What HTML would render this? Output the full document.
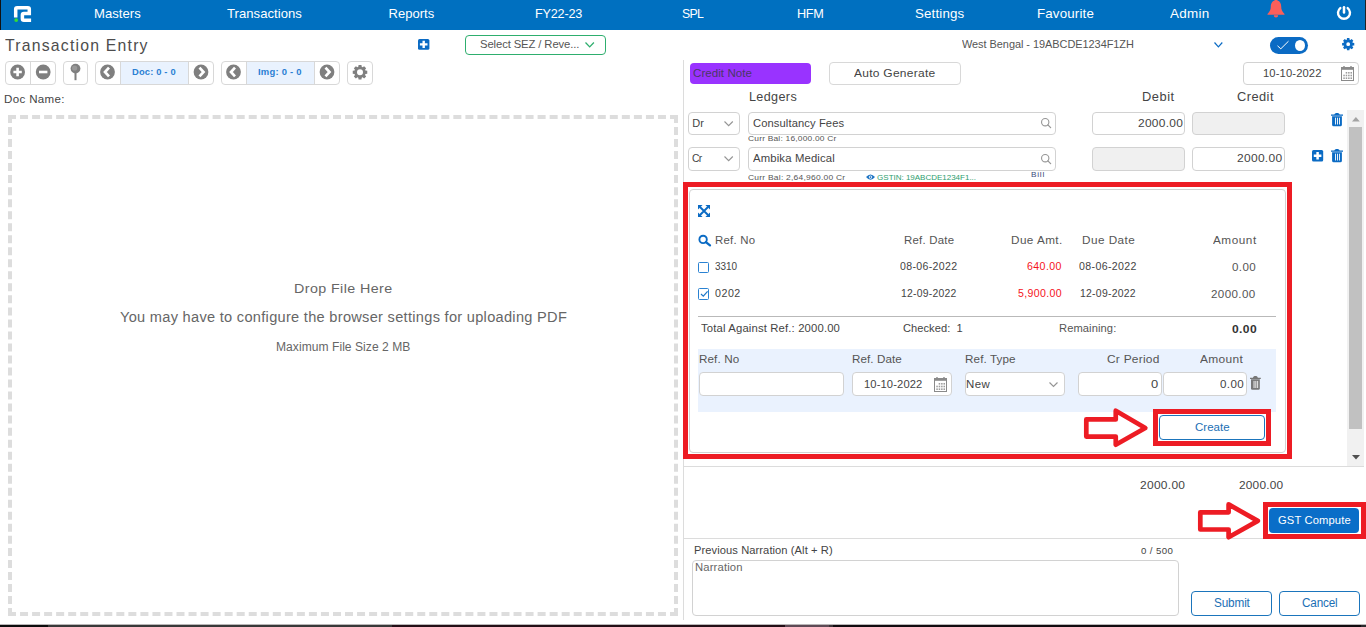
<!DOCTYPE html>
<html lang="en">
<head>
<meta charset="utf-8">
<title>Transaction Entry</title>
<style>
*{box-sizing:border-box;margin:0;padding:0}
html,body{width:1366px;height:627px;overflow:hidden;background:#fff}
body{position:relative;font-family:"Liberation Sans",Arial,sans-serif;color:#444;font-size:12px}
.a{position:absolute}
.t{position:absolute;white-space:nowrap;line-height:1;transform-origin:0 0}
.nav{left:0;top:0;width:1366px;height:30px;background:#0070c0}
.box{position:absolute;border:1px solid #d2d2d2;border-radius:4px;background:#fff}
.dis{background:#f0f0f0}
.btn{position:absolute;border:1px solid #d8d8d8;border-radius:4px;background:#fff}
svg{position:absolute;overflow:visible}
</style>
</head>
<body>
<div class="a nav">
<div class="a" style="left:0;top:0;width:1px;height:30px;background:#111"></div>
<div class="a" style="left:1365px;top:0;width:1px;height:30px;background:#222"></div>
<svg style="left:13px;top:5px" width="19" height="18" viewBox="0 0 19 18"><path d="M2.700 12.500V4.200Q2.700 2.700 4.200 2.700H14.800Q16.300 2.700 16.300 4.200V8.600H10.900Q9.400 8.600 9.400 10.100V13.700Q9.400 15.200 10.900 15.200H18.100" fill="none" stroke="#fff" stroke-width="3.500"/><circle cx="3.200" cy="15.100" r="1.900" fill="#35dc35"/></svg>

<svg style="left:1267.4px;top:0px" width="18" height="18" viewBox="0 0 18 18"><path d="M9 -1C9.900 -1 10.400 -.3 10.400 .5C13 1.300 14.200 3.600 14.200 6.500C14.200 9.600 15.200 11.600 17.500 14V14.800H.5V14C2.800 11.600 3.800 9.600 3.800 6.500C3.800 3.600 5 1.300 7.600 .5C7.600 -.3 8.100 -1 9 -1Z" fill="#fa5f5a"/><path d="M6.800 15.200H11.200A2.200 2.200 0 0 1 6.800 15.200Z" fill="#fa5f5a"/></svg>

<svg style="left:1337.3px;top:6px" width="14" height="15" viewBox="0 0 14 15"><path d="M3.300 2.100A6 6 0 1 0 10.700 2.100" fill="none" stroke="#fff" stroke-width="2.400" stroke-linecap="round"/><path d="M7 1.200V6.400" stroke="#fff" stroke-width="2.500" stroke-linecap="round"/></svg>

<div class="t" style="left:94.2px;top:7px;font-size:13px;color:#fff;transform:scaleX(1.006);letter-spacing:0.05px;">Masters</div>
<div class="t" style="left:227.1px;top:7px;font-size:13px;color:#fff;transform:scaleX(1.006);letter-spacing:0.04px;">Transactions</div>
<div class="t" style="left:388.6px;top:7px;font-size:13px;color:#fff;letter-spacing:0.02px;">Reports</div>
<div class="t" style="left:534.6px;top:7px;font-size:13px;color:#fff;transform:scaleX(0.974);letter-spacing:-0.22px;">FY22-23</div>
<div class="t" style="left:681.6px;top:7px;font-size:13px;color:#fff;transform:scaleX(0.942);letter-spacing:-0.72px;">SPL</div>
<div class="t" style="left:796.6px;top:7px;font-size:13px;color:#fff;transform:scaleX(0.975);letter-spacing:-0.35px;">HFM</div>
<div class="t" style="left:915.1px;top:7px;font-size:13px;color:#fff;transform:scaleX(1.024);letter-spacing:0.16px;">Settings</div>
<div class="t" style="left:1036.6px;top:7px;font-size:13px;color:#fff;transform:scaleX(1.024);letter-spacing:0.16px;">Favourite</div>
<div class="t" style="left:1170.1px;top:7px;font-size:13px;color:#fff;transform:scaleX(1.033);letter-spacing:0.30px;">Admin</div>
</div>
<div class="t" style="left:5.1px;top:37px;font-size:17px;color:#4d4d4d;transform:scaleX(0.930);letter-spacing:1.29px;">Transaction Entry</div>
<svg style="left:418px;top:38.7px" width="11.4" height="10.8" viewBox="0 0 11.4 10.8"><rect width="11.400" height="10.800" rx="1.500" fill="#0b6bc4"/><path d="M5.700 1.700V9.100M1.900 5.400H9.500" stroke="#fff" stroke-width="2.400"/></svg>

<div class="a" style="left:465px;top:35px;width:141px;height:20px;border:1px solid #2eae6e;border-radius:4px;background:#fff"></div>

<div class="t" style="left:480.1px;top:39px;font-size:11.5px;color:#555;transform:scaleX(0.980);letter-spacing:-0.11px;">Select SEZ / Reve...</div>
<svg style="left:585.4px;top:42px" width="9.4" height="5.6" viewBox="0 0 9.4 5.6"><path d="M.5 .5L4.7 4.9L8.9 .5" fill="none" stroke="#2eae6e" stroke-width="1.3"/></svg>

<div class="t" style="left:961.6px;top:39px;font-size:11px;color:#555;transform:scaleX(0.994);letter-spacing:-0.04px;">West Bengal - 19ABCDE1234F1ZH</div>
<svg style="left:1214.3px;top:42.3px" width="8.8" height="5.6" viewBox="0 0 8.8 5.6"><path d="M.5 .5L4.4 4.9L8.3 .5" fill="none" stroke="#0b6bc4" stroke-width="1.2"/></svg>

<div class="a" style="left:1270px;top:37px;width:38px;height:17px;border-radius:9px;background:#0b6bc4"></div>

<svg style="left:1276px;top:40px" width="14" height="10" viewBox="0 0 14 10"><path d="M1.500 5.800L4.800 8.800L12.500 1.200" fill="none" stroke="#fff" stroke-width="1"/></svg>

<div class="a" style="left:1295px;top:40px;width:10px;height:11px;border-radius:50%;background:#fff"></div>

<svg style="left:1342px;top:38px" width="12.4" height="12.4" viewBox="0 0 12.4 12.4"><path fill-rule="evenodd" fill="#0b6bc4" d="M4.78 1.72 L4.99 0.12 L7.41 0.12 L7.62 1.72 L8.37 2.03 L9.64 1.04 L11.36 2.76 L10.37 4.03 L10.68 4.78 L12.28 4.99 L12.28 7.41 L10.68 7.62 L10.37 8.37 L11.36 9.64 L9.64 11.36 L8.37 10.37 L7.62 10.68 L7.41 12.28 L4.99 12.28 L4.78 10.68 L4.03 10.37 L2.76 11.36 L1.04 9.64 L2.03 8.37 L1.72 7.62 L0.12 7.41 L0.12 4.99 L1.72 4.78 L2.03 4.03 L1.04 2.76 L2.76 1.04 L4.03 2.03Z M4.30 6.20 a1.90 1.90 0 1 0 3.80 0 a1.90 1.90 0 1 0 -3.80 0Z"/></svg>

<div class="btn" style="left:5px;top:61px;width:51px;height:24px;"></div>

<div class="a" style="left:30px;top:61px;width:1px;height:24px;background:#d8d8d8"></div>

<div class="btn" style="left:63px;top:61px;width:25px;height:24px;"></div>

<div class="btn" style="left:95px;top:61px;width:119px;height:24px;"></div>

<div class="a" style="left:120px;top:62px;width:69px;height:22px;background:#e9f2fe;border-left:1px solid #d8d8d8;border-right:1px solid #d8d8d8"></div>

<div class="btn" style="left:221px;top:61px;width:119px;height:24px;"></div>

<div class="a" style="left:246px;top:62px;width:69px;height:22px;background:#e9f2fe;border-left:1px solid #d8d8d8;border-right:1px solid #d8d8d8"></div>

<div class="btn" style="left:347px;top:61px;width:26px;height:24px;"></div>

<svg style="left:0;top:60px" width="380" height="26" viewBox="0 60 380 26"><circle cx="17.6" cy="72" r="7.4" fill="#7f7f7f"/><path d="M13.4 72.0h8.4M17.6 67.8v8.4" stroke="#fff" stroke-width="2.6"/><circle cx="43.2" cy="72" r="7.4" fill="#7f7f7f"/><path d="M39.0 72.0h8.4" stroke="#fff" stroke-width="2.6"/><circle cx="107.5" cy="72" r="7.4" fill="#7f7f7f"/><path d="M109.0 67.7l-4 4.300l4 4.300" fill="none" stroke="#fff" stroke-width="2.700"/><circle cx="201" cy="72" r="7.4" fill="#7f7f7f"/><path d="M199.5 67.7l4 4.300l-4 4.300" fill="none" stroke="#fff" stroke-width="2.700"/><circle cx="233.5" cy="72" r="7.4" fill="#7f7f7f"/><path d="M235.0 67.7l-4 4.300l4 4.300" fill="none" stroke="#fff" stroke-width="2.700"/><circle cx="327" cy="72" r="7.4" fill="#7f7f7f"/><path d="M325.5 67.7l4 4.300l-4 4.300" fill="none" stroke="#fff" stroke-width="2.700"/><circle cx="75.500" cy="68.600" r="4.900" fill="#7f7f7f"/><circle cx="74.600" cy="68" r="2.600" fill="#989898"/><rect x="74.500" y="73" width="2" height="7.200" fill="#7f7f7f"/><path fill-rule="evenodd" fill="#7f7f7f" d="M358.28 66.87 L358.56 65.04 L361.44 65.04 L361.72 66.87 L362.63 67.24 L364.11 66.15 L366.15 68.19 L365.06 69.67 L365.43 70.58 L367.26 70.86 L367.26 73.74 L365.43 74.02 L365.06 74.93 L366.15 76.41 L364.11 78.45 L362.63 77.36 L361.72 77.73 L361.44 79.56 L358.56 79.56 L358.28 77.73 L357.37 77.36 L355.89 78.45 L353.85 76.41 L354.94 74.93 L354.57 74.02 L352.74 73.74 L352.74 70.86 L354.57 70.58 L354.94 69.67 L353.85 68.19 L355.89 66.15 L357.37 67.24Z M357.00 72.30 a3.00 3.00 0 1 0 6.00 0 a3.00 3.00 0 1 0 -6.00 0Z"/></svg>
<div class="t" style="left:132.1px;top:68px;font-size:9px;color:#2b7fd3;font-weight:bold;transform:scaleX(1.037);letter-spacing:0.17px;">Doc: 0 - 0</div>
<div class="t" style="left:258.1px;top:68px;font-size:9px;color:#2b7fd3;font-weight:bold;transform:scaleX(1.050);letter-spacing:0.22px;">Img: 0 - 0</div>
<div class="t" style="left:4.2px;top:94px;font-size:11px;color:#444;transform:scaleX(1.049);letter-spacing:0.34px;">Doc Name:</div>
<div class="a" style="left:8px;top:115px;width:670px;height:501px;border:4px dashed #ddd"></div>

<div class="t" style="left:293.6px;top:282px;font-size:13.5px;color:#666;transform:scaleX(1.057);letter-spacing:0.39px;">Drop File Here</div>
<div class="t" style="left:119.6px;top:310px;font-size:14px;color:#666;transform:scaleX(1.042);letter-spacing:0.28px;">You may have to configure the browser settings for uploading PDF</div>
<div class="t" style="left:275.6px;top:341px;font-size:12px;color:#666;transform:scaleX(1.006);letter-spacing:0.04px;">Maximum File Size 2 MB</div>
<div class="a" style="left:683px;top:60px;width:1px;height:560px;background:#dcdcdc"></div>

<div class="a" style="left:690px;top:63px;width:121px;height:21px;background:#9933ff;border-radius:4px"></div>

<div class="t" style="left:692.6px;top:68px;font-size:11.5px;color:#4b3766;transform:scaleX(1.007);letter-spacing:0.04px;">Credit Note</div>
<div class="btn" style="left:829px;top:62px;width:132px;height:23px;"></div>

<div class="t" style="left:854.1px;top:68px;font-size:11.5px;color:#444;transform:scaleX(1.042);letter-spacing:0.26px;">Auto Generate</div>
<div class="box" style="left:1243px;top:62px;width:116px;height:23px;"></div>

<div class="t" style="left:1263.2px;top:68px;font-size:11px;color:#444;transform:scaleX(1.019);letter-spacing:0.12px;">10-10-2022</div>
<svg style="left:1341px;top:65.6px" width="13" height="15" viewBox="0 0 13 15"><rect x=".5" y="1.500" width="12" height="13" fill="#fff" stroke="#8a8a8a" stroke-width="1"/><rect x="0" y="1" width="13" height="2.800" fill="#8a8a8a"/><path d="M3 0V2.200M10 0V2.200" stroke="#8a8a8a" stroke-width="1.400"/><rect x="4.7" y="6" width="1.500" height="1.600" fill="#9c9c9c"/><rect x="7.1" y="6" width="1.500" height="1.600" fill="#9c9c9c"/><rect x="9.5" y="6" width="1.500" height="1.600" fill="#9c9c9c"/><rect x="2.3" y="8.7" width="1.500" height="1.600" fill="#9c9c9c"/><rect x="4.7" y="8.7" width="1.500" height="1.600" fill="#9c9c9c"/><rect x="7.1" y="8.7" width="1.500" height="1.600" fill="#9c9c9c"/><rect x="9.5" y="8.7" width="1.500" height="1.600" fill="#9c9c9c"/><rect x="2.3" y="11.4" width="1.500" height="1.600" fill="#9c9c9c"/><rect x="4.7" y="11.4" width="1.500" height="1.600" fill="#9c9c9c"/><rect x="7.1" y="11.4" width="1.500" height="1.600" fill="#9c9c9c"/><rect x="9.5" y="11.4" width="1.500" height="1.600" fill="#9c9c9c"/></svg>

<div class="t" style="left:749.4px;top:91px;font-size:12px;color:#444;transform:scaleX(1.049);letter-spacing:0.35px;">Ledgers</div>
<div class="t" style="left:1142.2px;top:91px;font-size:12px;color:#444;transform:scaleX(1.070);letter-spacing:0.49px;">Debit</div>
<div class="t" style="left:1237.3px;top:91px;font-size:12px;color:#444;transform:scaleX(1.068);letter-spacing:0.43px;">Credit</div>
<div class="box" style="left:688px;top:112px;width:52px;height:23px;"></div>

<div class="t" style="left:692.3px;top:118px;font-size:11px;color:#444;letter-spacing:-0.00px;">Dr</div>
<svg style="left:723.7px;top:121.2px" width="9.3" height="5.4" viewBox="0 0 9.3 5.4"><path d="M.5 .5L4.65 4.7L8.8 .5" fill="none" stroke="#959595" stroke-width="1.15"/></svg>

<div class="box" style="left:748px;top:112px;width:308px;height:23px;"></div>

<div class="t" style="left:753.1px;top:118px;font-size:11px;color:#444;transform:scaleX(1.017);letter-spacing:0.10px;">Consultancy Fees</div>
<svg style="left:1041px;top:118px" width="10.2" height="10.2" viewBox="0 0 10.2 10.2"><circle cx="4.222" cy="4.222" r="3.672" fill="none" stroke="#959595" stroke-width="1.1"/><path d="M6.86584 6.86584L9.65 9.65" stroke="#959595" stroke-width="1.265" stroke-linecap="round"/></svg>

<div class="box" style="left:1092px;top:112px;width:93px;height:23px;"></div>

<div class="t" style="left:1137.6px;top:118px;font-size:11.5px;color:#444;transform:scaleX(1.039);letter-spacing:0.27px;">2000.00</div>
<div class="box dis" style="left:1192px;top:112px;width:93px;height:23px;"></div>

<svg style="left:1331px;top:112.5px" width="12" height="13.2" viewBox="0 0 12 13.2" preserveAspectRatio="none"><path d="M0 1.600H12V2.800H0ZM3.300 1.800C3.300 -.5 8.700 -.5 8.700 1.800Z" fill="#0b6bc4"/><path d="M1.100 3.200H10.900V11.700Q10.900 13.200 9.400 13.200H2.600Q1.100 13.200 1.100 11.700Z" fill="#0b6bc4"/><path d="M4.500 4.700V11.500M6.500 4.700V11.500M8.500 4.700V11.500" stroke="#fff" stroke-width=".9"/></svg>

<div class="t" style="left:747.6px;top:135px;font-size:8px;color:#555;transform:scaleX(1.051);letter-spacing:0.19px;">Curr Bal: 16,000.00 Cr</div>
<div class="box" style="left:688px;top:147px;width:52px;height:24px;"></div>

<div class="t" style="left:692.3px;top:153px;font-size:11px;color:#444;transform:scaleX(0.942);letter-spacing:-0.67px;">Cr</div>
<svg style="left:723.7px;top:155.7px" width="9.3" height="5.4" viewBox="0 0 9.3 5.4"><path d="M.5 .5L4.65 4.7L8.8 .5" fill="none" stroke="#959595" stroke-width="1.15"/></svg>

<div class="box" style="left:748px;top:147px;width:308px;height:24px;"></div>

<div class="t" style="left:753.1px;top:153px;font-size:11px;color:#444;transform:scaleX(1.026);letter-spacing:0.16px;">Ambika Medical</div>
<svg style="left:1041px;top:153.5px" width="10.2" height="10.2" viewBox="0 0 10.2 10.2"><circle cx="4.222" cy="4.222" r="3.672" fill="none" stroke="#959595" stroke-width="1.1"/><path d="M6.86584 6.86584L9.65 9.65" stroke="#959595" stroke-width="1.265" stroke-linecap="round"/></svg>

<div class="box dis" style="left:1092px;top:147px;width:93px;height:24px;"></div>

<div class="box" style="left:1192px;top:147px;width:93px;height:24px;"></div>

<div class="t" style="left:1237.2px;top:153px;font-size:11.5px;color:#444;transform:scaleX(1.041);letter-spacing:0.29px;">2000.00</div>
<svg style="left:1312.2px;top:150.3px" width="11.2" height="11.5" viewBox="0 0 11.2 11.5"><rect width="11.200" height="11.500" rx="1.500" fill="#0b6bc4"/><path d="M5.600 1.900V9.600M1.800 5.750H9.400" stroke="#fff" stroke-width="2.500"/></svg>

<svg style="left:1331px;top:148.5px" width="12" height="13.2" viewBox="0 0 12 13.2" preserveAspectRatio="none"><path d="M0 1.600H12V2.800H0ZM3.300 1.800C3.300 -.5 8.700 -.5 8.700 1.800Z" fill="#0b6bc4"/><path d="M1.100 3.200H10.900V11.700Q10.900 13.200 9.400 13.200H2.600Q1.100 13.200 1.100 11.700Z" fill="#0b6bc4"/><path d="M4.500 4.700V11.500M6.500 4.700V11.500M8.500 4.700V11.500" stroke="#fff" stroke-width=".9"/></svg>

<div class="t" style="left:747.6px;top:174px;font-size:8px;color:#555;transform:scaleX(1.058);letter-spacing:0.22px;">Curr Bal: 2,64,960.00 Cr</div>
<svg style="left:865.8px;top:174px" width="9" height="6.2" viewBox="0 0 9 6.2"><path d="M0 3.100Q4.500 -2.200 9 3.100Q4.500 8.400 0 3.100Z" fill="#1d74c4"/><circle cx="4.500" cy="3.100" r="1.700" fill="#fff"/><circle cx="4.500" cy="3.100" r=".9" fill="#1d74c4"/></svg>

<div class="t" style="left:877.1px;top:174px;font-size:8px;color:#2e9e6e;letter-spacing:-0.01px;">GSTIN: 19ABCDE1234F1...</div>
<div class="t" style="left:1031.1px;top:171px;font-size:7.5px;color:#3a4a7a;transform:scaleX(1.100);letter-spacing:0.69px;">Bill</div>
<div class="a" style="left:1347px;top:110px;width:17px;height:356px;background:#f1f1f1"></div>

<div class="a" style="left:1349px;top:127px;width:13px;height:302px;background:#c1c1c1"></div>

<svg style="left:1351.5px;top:116.7px" width="7.8" height="4.4" viewBox="0 0 7.8 4.4"><path d="M0 4.400L3.900 0L7.800 4.400Z" fill="#a3a3a3"/></svg>

<svg style="left:1351.5px;top:454.5px" width="8" height="4.5" viewBox="0 0 8 4.5"><path d="M0 0L4 4.500L8 0Z" fill="#505050"/></svg>

<div class="a" style="left:689px;top:189px;width:597px;height:264px;border:1px solid #d2d2d2;border-radius:4px;background:#fff"></div>

<div class="a" style="left:683px;top:182px;width:609px;height:277px;border:5px solid #ed1c24"></div>

<svg style="left:698px;top:205.2px" width="12" height="12" viewBox="0 0 12 12"><path d="M2 2L10 10M10 2L2 10" stroke="#0b6bc4" stroke-width="1.900"/><path d="M0 0H4.600L0 4.600ZM12 0H7.400L12 4.600ZM0 12H4.600L0 7.400ZM12 12H7.400L12 7.400Z" fill="#0b6bc4"/></svg>

<svg style="left:698.3px;top:235px" width="13" height="11.5" viewBox="0 0 13 11.5"><circle cx="5.100" cy="4.400" r="3.700" fill="none" stroke="#0b6bc4" stroke-width="1.900"/><path d="M7.900 7.100L12 10.400" stroke="#0b6bc4" stroke-width="2.300" stroke-linecap="round"/></svg>

<div class="t" style="left:715.4px;top:235px;font-size:11px;color:#555;transform:scaleX(1.037);letter-spacing:0.23px;">Ref. No</div>
<div class="t" style="left:903.9px;top:235px;font-size:11px;color:#555;transform:scaleX(1.037);letter-spacing:0.22px;">Ref. Date</div>
<div class="t" style="left:1010.6px;top:235px;font-size:11px;color:#555;transform:scaleX(1.065);letter-spacing:0.42px;">Due Amt.</div>
<div class="t" style="left:1081.8px;top:235px;font-size:11px;color:#555;transform:scaleX(1.067);letter-spacing:0.44px;">Due Date</div>
<div class="t" style="left:1212.5px;top:235px;font-size:11px;color:#555;transform:scaleX(1.067);letter-spacing:0.51px;">Amount</div>
<div class="a" style="left:698px;top:261.5px;width:11.3px;height:11.5px;border:1px solid #2a82d2;border-radius:1.5px;background:#fff"></div>

<div class="t" style="left:715.0px;top:262px;font-size:10px;color:#444;transform:scaleX(0.994);letter-spacing:-0.04px;">3310</div>
<div class="t" style="left:900.3px;top:262px;font-size:10px;color:#444;transform:scaleX(1.056);letter-spacing:0.32px;">08-06-2022</div>
<div class="t" style="left:1027.4px;top:262px;font-size:10px;color:#f5131b;transform:scaleX(1.062);letter-spacing:0.38px;">640.00</div>
<div class="t" style="left:1079.2px;top:262px;font-size:10px;color:#444;transform:scaleX(1.060);letter-spacing:0.34px;">08-06-2022</div>
<div class="t" style="left:1231.6px;top:262px;font-size:11px;color:#555;transform:scaleX(1.054);letter-spacing:0.39px;">0.00</div>
<div class="a" style="left:698px;top:288.3px;width:11.3px;height:11.5px;border:1px solid #2a82d2;border-radius:1.5px;background:#fff"></div>

<svg style="left:699.5px;top:290.3px" width="8.5" height="7.5" viewBox="0 0 8.5 7.5"><path d="M1 4L3.300 6.200L7.600 1.300" fill="none" stroke="#1f78c8" stroke-width="1.200"/></svg>

<div class="t" style="left:715.0px;top:289px;font-size:10px;color:#444;transform:scaleX(1.066);letter-spacing:0.49px;">0202</div>
<div class="t" style="left:900.8px;top:289px;font-size:10px;color:#444;transform:scaleX(1.039);letter-spacing:0.22px;">12-09-2022</div>
<div class="t" style="left:1018.2px;top:289px;font-size:10px;color:#f5131b;transform:scaleX(1.059);letter-spacing:0.33px;">5,900.00</div>
<div class="t" style="left:1079.8px;top:289px;font-size:10px;color:#444;transform:scaleX(1.043);letter-spacing:0.24px;">12-09-2022</div>
<div class="t" style="left:1211.2px;top:289px;font-size:11px;color:#555;transform:scaleX(1.054);letter-spacing:0.36px;">2000.00</div>
<div class="a" style="left:698px;top:316px;width:578px;height:1px;background:#b9b9b9"></div>

<div class="t" style="left:701.0px;top:323px;font-size:11px;color:#444;transform:scaleX(1.028);letter-spacing:0.14px;">Total Against Ref.: 2000.00</div>
<div class="t" style="left:902.6px;top:323px;font-size:11px;color:#444;transform:scaleX(1.009);letter-spacing:0.05px;white-space:pre;">Checked:  1</div>
<div class="t" style="left:1058.6px;top:323px;font-size:11px;color:#555;transform:scaleX(1.014);letter-spacing:0.09px;">Remaining:</div>
<div class="t" style="left:1231.6px;top:324px;font-size:11.5px;color:#333;font-weight:bold;transform:scaleX(1.048);letter-spacing:0.36px;">0.00</div>
<div class="a" style="left:698px;top:349px;width:578px;height:63px;background:#eaf2fe"></div>

<div class="t" style="left:698.6px;top:354px;font-size:11.5px;color:#555;transform:scaleX(1.015);letter-spacing:0.10px;">Ref. No</div>
<div class="t" style="left:851.8px;top:354px;font-size:11.5px;color:#555;transform:scaleX(1.012);letter-spacing:0.08px;">Ref. Date</div>
<div class="t" style="left:964.6px;top:354px;font-size:11.5px;color:#555;transform:scaleX(1.016);letter-spacing:0.10px;">Ref. Type</div>
<div class="t" style="left:1107.3px;top:354px;font-size:11.5px;color:#555;transform:scaleX(1.039);letter-spacing:0.23px;">Cr Period</div>
<div class="t" style="left:1199.7px;top:354px;font-size:11.5px;color:#555;transform:scaleX(1.040);letter-spacing:0.32px;">Amount</div>
<div class="box" style="left:699px;top:372px;width:145px;height:24px;"></div>

<div class="box" style="left:852px;top:372px;width:100px;height:24px;"></div>

<div class="t" style="left:864.3px;top:379px;font-size:11px;color:#444;transform:scaleX(1.018);letter-spacing:0.11px;">10-10-2022</div>
<svg style="left:934px;top:376.8px" width="13" height="15" viewBox="0 0 13 15"><rect x=".5" y="1.500" width="12" height="13" fill="#fff" stroke="#8a8a8a" stroke-width="1"/><rect x="0" y="1" width="13" height="2.800" fill="#8a8a8a"/><path d="M3 0V2.200M10 0V2.200" stroke="#8a8a8a" stroke-width="1.400"/><rect x="4.7" y="6" width="1.500" height="1.600" fill="#9c9c9c"/><rect x="7.1" y="6" width="1.500" height="1.600" fill="#9c9c9c"/><rect x="9.5" y="6" width="1.500" height="1.600" fill="#9c9c9c"/><rect x="2.3" y="8.7" width="1.500" height="1.600" fill="#9c9c9c"/><rect x="4.7" y="8.7" width="1.500" height="1.600" fill="#9c9c9c"/><rect x="7.1" y="8.7" width="1.500" height="1.600" fill="#9c9c9c"/><rect x="9.5" y="8.7" width="1.500" height="1.600" fill="#9c9c9c"/><rect x="2.3" y="11.4" width="1.500" height="1.600" fill="#9c9c9c"/><rect x="4.7" y="11.4" width="1.500" height="1.600" fill="#9c9c9c"/><rect x="7.1" y="11.4" width="1.500" height="1.600" fill="#9c9c9c"/><rect x="9.5" y="11.4" width="1.500" height="1.600" fill="#9c9c9c"/></svg>

<div class="box" style="left:965px;top:372px;width:99.5px;height:24px;"></div>

<div class="t" style="left:965.9px;top:379px;font-size:11px;color:#444;transform:scaleX(1.040);letter-spacing:0.44px;">New</div>
<svg style="left:1049px;top:381.8px" width="9" height="5.2" viewBox="0 0 9 5.2"><path d="M.5 .5L4.5 4.5L8.5 .5" fill="none" stroke="#959595" stroke-width="1.15"/></svg>

<div class="box" style="left:1078px;top:372px;width:84px;height:24px;"></div>

<div class="t" style="left:1151.2px;top:379px;font-size:11px;color:#444;transform:scaleX(1.176);">0</div>
<div class="box" style="left:1163px;top:372px;width:84px;height:24px;"></div>

<div class="t" style="left:1219.6px;top:379px;font-size:11px;color:#444;transform:scaleX(1.054);letter-spacing:0.39px;">0.00</div>
<svg style="left:1250.4px;top:375.9px" width="10.8" height="13.8" viewBox="0 0 12 13.2" preserveAspectRatio="none"><path d="M0 1.600H12V2.800H0ZM3.300 1.800C3.300 -.5 8.700 -.5 8.700 1.800Z" fill="#777"/><path d="M1.100 3.200H10.900V11.700Q10.900 13.200 9.400 13.200H2.600Q1.100 13.200 1.100 11.700Z" fill="#777"/><path d="M4.500 4.700V11.500M6.500 4.700V11.500M8.500 4.700V11.500" stroke="#fff" stroke-width=".9"/></svg>

<svg style="left:0;top:0" width="1366" height="627" viewBox="0 0 1366 627"><path d="M1086.30 419.40L1115.75 419.40L1115.75 410.70L1145.30 428.00L1115.75 444.70L1115.75 436.60L1086.30 436.60Z" fill="#fff" stroke="#ed1c24" stroke-width="4.7" stroke-linejoin="round"/></svg>

<div class="a" style="left:1153px;top:409px;width:118px;height:37px;border:5px solid #ed1c24;background:#fff"></div>

<div class="a" style="left:1159px;top:415px;width:106px;height:25px;border:1px solid #1b75bc;border-radius:4px;background:#fff"></div>

<div class="t" style="left:1195.0px;top:422px;font-size:11.5px;color:#1b6fb5;letter-spacing:0.01px;">Create</div>
<div class="a" style="left:684px;top:466px;width:680px;height:1px;background:#dcdcdc"></div>

<div class="t" style="left:1139.7px;top:480px;font-size:11.5px;color:#444;transform:scaleX(1.040);letter-spacing:0.28px;">2000.00</div>
<div class="t" style="left:1239.3px;top:480px;font-size:11.5px;color:#444;transform:scaleX(1.030);letter-spacing:0.21px;">2000.00</div>
<div class="a" style="left:684px;top:538px;width:680px;height:1px;background:#dcdcdc"></div>

<svg style="left:0;top:0" width="1366" height="627" viewBox="0 0 1366 627"><path d="M1200.30 512.30L1228.60 512.30L1228.60 504.40L1257.80 520.90L1228.60 537.20L1228.60 529.50L1200.30 529.50Z" fill="#fff" stroke="#ed1c24" stroke-width="4.7" stroke-linejoin="round"/></svg>

<div class="a" style="left:1263px;top:502px;width:103px;height:37px;border:5px solid #ed1c24;background:#fff"></div>

<div class="a" style="left:1269px;top:508px;width:90px;height:25px;border-radius:4px;background:#0a6ec8"></div>

<div class="t" style="left:1277.9px;top:515px;font-size:11px;color:#fff;transform:scaleX(1.018);letter-spacing:0.13px;">GST Compute</div>
<div class="t" style="left:694.1px;top:545px;font-size:11px;color:#444;transform:scaleX(1.014);letter-spacing:0.07px;">Previous Narration (Alt + R)</div>
<div class="t" style="left:1141.3px;top:547px;font-size:9px;color:#444;transform:scaleX(1.076);letter-spacing:0.35px;">0 / 500</div>
<div class="box" style="left:692px;top:560px;width:486.5px;height:56px;"></div>

<div class="t" style="left:695.4px;top:562px;font-size:11px;color:#666;transform:scaleX(1.025);letter-spacing:0.14px;">Narration</div>
<div class="a" style="left:1191px;top:591px;width:81px;height:25px;border:1px solid #1b75bc;border-radius:4px;background:#fff"></div>

<div class="t" style="left:1213.7px;top:597px;font-size:12px;color:#1b6fb5;transform:scaleX(0.980);letter-spacing:-0.15px;">Submit</div>
<div class="a" style="left:1279px;top:591px;width:81px;height:25px;border:1px solid #1b75bc;border-radius:4px;background:#fff"></div>

<div class="t" style="left:1302.0px;top:597px;font-size:12px;color:#1b6fb5;transform:scaleX(0.978);letter-spacing:-0.17px;">Cancel</div>
<div class="a" style="left:0px;top:624px;width:1366px;height:1px;background:#b9b6b7"></div>

<div class="a" style="left:0px;top:625px;width:48px;height:2px;background:#0c0c0c"></div>

<div class="a" style="left:48px;top:625px;width:344px;height:2px;background:#383838"></div>

<div class="a" style="left:392px;top:625px;width:393px;height:2px;background:#230e16"></div>

<div class="a" style="left:785px;top:625px;width:44px;height:2px;background:#5e4a55"></div>

<div class="a" style="left:829px;top:625px;width:4px;height:2px;background:#3c3438"></div>

<div class="a" style="left:833px;top:625px;width:528px;height:2px;background:#110b0f"></div>

<div class="a" style="left:1361px;top:625px;width:5px;height:2px;background:#2a2a2e"></div>

</body>
</html>
